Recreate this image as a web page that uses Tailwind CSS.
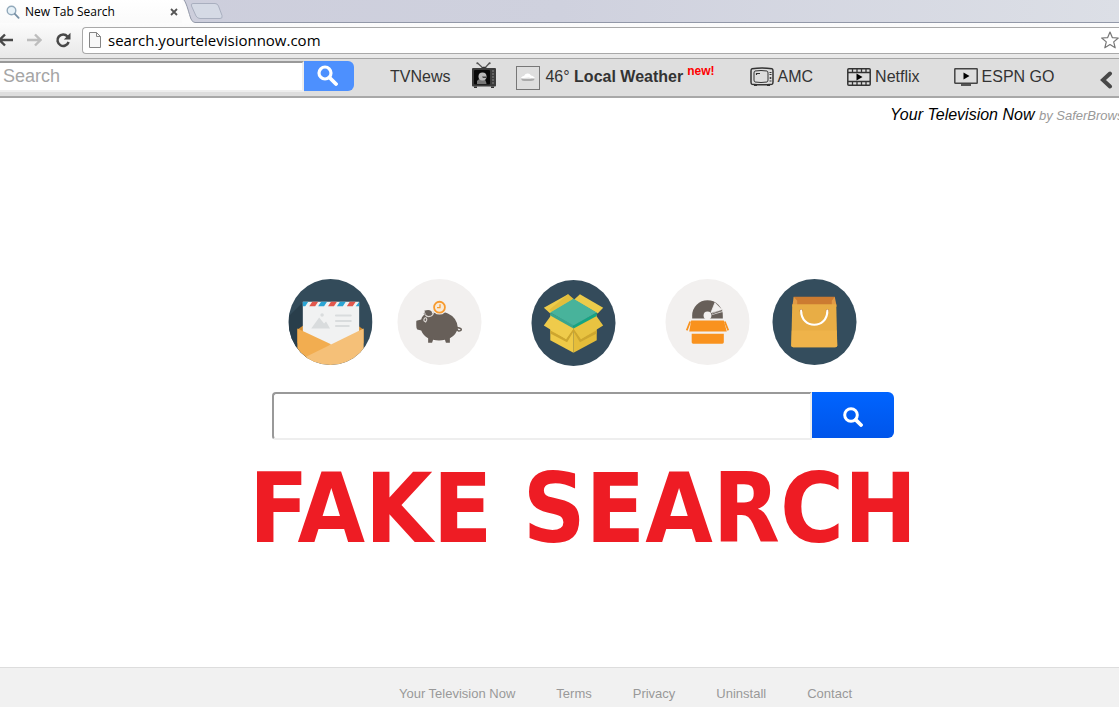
<!DOCTYPE html>
<html lang="en">
<head>
  <meta charset="UTF-8">
  <meta name="viewport" content="width=device-width, initial-scale=1.0">
  <title>New Tab Search</title>
  <script src="https://cdn.jsdelivr.net/npm/@tailwindcss/browser@4"></script>
</head>
<body class="min-h-screen flex flex-col bg-white overflow-x-hidden font-['Liberation_Sans',Arial,sans-serif] text-[#333]">

  <!-- Browser chrome -->
  <header class="font-['Open_Sans','Noto_Sans',sans-serif] text-black">
    <!-- Tab strip -->
    <div class="flex h-[23px] bg-gradient-to-r from-[#cccddb] via-[#cfd1de] to-[#dcdfe6]">
      <div class="flex items-center w-[182px] pl-1.5 pr-0.5 bg-gradient-to-b from-white to-[#fafafa]">
        <svg class="w-3.5 h-3.5" viewBox="0 0 14 14" fill="none">
          <circle cx="5.500" cy="5.500" r="4.300" fill="#e8f2f8" stroke="#92a9bb" stroke-width="1.400"/>
          <path d="M8.800 8.800L12.600 12.800" stroke="#7890a5" stroke-width="1.800" stroke-linecap="round"/>
        </svg>
        <span class="ml-[5px] text-xs leading-4">New Tab Search</span>
        <button class="ml-auto w-3 h-3 flex items-center justify-center" aria-label="Close tab">
          <svg class="w-2 h-2" viewBox="0 0 8 8"><path d="M1 1L7 7M7 1L1 7" stroke="#555" stroke-width="1.800"/></svg>
        </button>
      </div>
      <svg class="w-[50px] h-[23px]" viewBox="0 0 50 23" fill="none">
        <path d="M0 0H2C5 4 7 14 9 19Q10.500 22 13 22.500L50 22.500V23H0Z" fill="#fcfcfc"/>
        <path d="M2 0C5 4 7 14 9 19Q10.500 22.500 13 22.500H50" stroke="#9298a8"/>
        <path d="M11 3.500H33Q35.500 3.500 36.500 6L40 15.500Q41 18.500 38 18.500H18Q15.500 18.500 14 16L9.500 6Q8.500 3.500 11 3.500Z" fill="#d5dae5" stroke="#a9afbf"/>
      </svg>
      <div class="flex-1 border-b border-[#9298a8]"></div>
    </div>

    <!-- Address bar -->
    <div class="flex items-center h-[36px] pb-px bg-gradient-to-b from-[#fcfcfc] to-[#e8e8e8] border-b border-[#a5a5a5]">
      <button class="w-[14px]" aria-label="Back">
        <svg class="w-[14px] h-4" viewBox="0 0 14 16" fill="none" stroke="#484848" stroke-width="2.400"><path d="M13 8H0M5 2.500L-.5 8L5 13.500"/></svg>
      </button>
      <button class="ml-3" aria-label="Forward">
        <svg class="w-4 h-4" viewBox="0 0 16 16" fill="none" stroke="#bdbdbd" stroke-width="2.400"><path d="M1 8H14M9 2.500L14.500 8L9 13.500"/></svg>
      </button>
      <button class="ml-[13px]" aria-label="Reload">
        <svg class="w-4 h-4" viewBox="0 0 16 16" fill="none"><path d="M12.500 4.500A5.700 5.700 0 1 0 13.600 10" stroke="#484848" stroke-width="2.500"/><path d="M15.500 .8V7.500H8.800Z" fill="#484848"/></svg>
      </button>
      <div class="flex flex-1 items-center h-[27px] ml-[11px] pl-1.5 bg-white border border-r-0 border-[#a9a9a9] rounded-l-sm">
        <svg class="w-3 h-4" viewBox="0 0 12 16"><path d="M.5 .5H7.500L11.500 4.500V15.500H.5Z" fill="#f8f8f8" stroke="#858585"/><path d="M7.500 .5V4.500H11.500" fill="none" stroke="#858585"/></svg>
        <input class="flex-1 ml-[7px] text-[15px] leading-5 bg-transparent outline-none" type="text" aria-label="Address" value="search.yourtelevisionnow.com">
        <button aria-label="Bookmark this page">
          <svg class="w-[18px] h-[18px]" viewBox="0 0 18 18"><path d="M9 1L11.300 6.600L17.300 7L12.700 10.900L14.200 16.800L9 13.600L3.800 16.800L5.300 10.900L.7 7L6.700 6.600Z" fill="#fff" stroke="#777" stroke-width="1.200" stroke-linejoin="round"/></svg>
        </button>
      </div>
    </div>
  </header>

  <!-- Toolbar -->
  <nav class="flex items-center h-[39px] pb-0.5 pr-1.5 bg-[#dedede] border-b-2 border-[#a8a8a8] text-base leading-5 whitespace-nowrap">
    <form class="flex items-start h-[31px]">
      <input class="w-[304px] h-[31px] pl-[3px] bg-white border-2 border-l-0 border-t-[#999] border-r-[#eee] border-b-[#eee] text-lg leading-5 placeholder:text-[#a5a5a5] outline-none" type="text" placeholder="Search" aria-label="Search">
      <button class="flex justify-center items-center w-[50px] h-[30px] pb-0.5 pr-1 bg-[#4d90fe] rounded-r-md" type="button" aria-label="Search">
        <svg class="w-[21px] h-[21px]" viewBox="0 0 21 21" fill="none" stroke="#fff"><circle cx="8" cy="8" r="6" stroke-width="3.200"/><path d="M12.500 12.500L19 19" stroke-width="3.800" stroke-linecap="round"/></svg>
      </button>
    </form>
    <a class="ml-9" href="#">TVNews</a>
    <a class="ml-[22px] pb-1" href="#" aria-label="Watch TV">
      <svg class="w-6 h-[26px]" viewBox="0 0 24 26">
        <path d="M12 7L5.500 1M12 7L17.500 1" stroke="#555" stroke-width="1.200"/>
        <circle cx="5.300" cy="1.200" r="1" fill="#555"/><circle cx="17.700" cy="1.200" r="1" fill="#555"/>
        <path d="M9 6L12 4.500L15 6Z" fill="#333"/>
        <rect y="6" width="24" height="18.500" rx="1" fill="#3c3c3c"/>
        <rect x="2" y="8" width="16" height="14.500" rx="1" fill="#080808"/>
        <path d="M5 22V19Q6 17 9 17H12Q14 18 14.500 22Z" fill="#777"/>
        <circle cx="10.500" cy="14.500" r="4" fill="#b9b9b9"/>
        <path d="M10 14.500H14V16H11Z" fill="#444"/>
        <path d="M20 9H22M20 12H22M20 15H22M20 18H22M20 21H22" stroke="#888"/>
        <path d="M2 24.500H5V26H2ZM19 24.500H22V26H19Z" fill="#333"/>
      </svg>
    </a>
    <a class="flex items-center ml-5" href="#">
      <svg class="w-6 h-6 mt-0.5" viewBox="0 0 24 24">
        <rect x=".5" y=".5" width="23" height="23" fill="none" stroke="#777"/>
        <path d="M5 12.500Q5 10.500 8 10Q9 7 12 7.500Q14 7.500 15 9.500Q19 10.500 19 13Z" fill="#fff"/>
        <path d="M5 12.500H19Q18 15 15 15H8Q5.500 15 5 12.500Z" fill="#aaa"/>
        <path d="M5 12.500H15L13 11Z" fill="#eee"/>
      </svg>
      <span class="ml-[5px]">46° <b>Local Weather</b></span>
      <b class="ml-1 pb-3 text-xs text-[#f00]">new!</b>
    </a>
    <a class="flex items-center gap-1 ml-[35px]" href="#">
      <svg class="w-6 h-5" viewBox="0 0 24 20" fill="none" stroke="#333">
        <path d="M2 1.800Q12 .2 22 1.800Q23 2 23 4V15Q23 17 22 17.200Q12 18.500 2 17.200Q1 17 1 15V4Q1 2 2 1.800Z" stroke-width="1.500"/>
        <path d="M5 4Q11 3 17 4Q18 4.200 18 6V13Q18 14.800 17 15Q11 16 5 15Q4 14.800 4 13V6Q4 4.200 5 4Z"/>
        <path d="M6.500 8V6.500H10M19.500 5.500H21.500M19.500 7.500H21.500M19.500 14H21.500M4 18.500H7M17 18.500H20" stroke-width="1.200"/>
        <circle cx="20.500" cy="11" r="1" fill="#333" stroke="none"/>
      </svg>
      AMC
    </a>
    <a class="flex items-center gap-1 ml-[34px]" href="#">
      <svg class="w-6 h-5" viewBox="0 0 24 20" fill="none" stroke="#333">
        <rect x=".8" y="1.800" width="22.400" height="16.400" rx="1" stroke-width="1.500"/>
        <path d="M1 5.500H23M1 14.500H23M5.500 2V5.500M10 2V5.500M14.500 2V5.500M19 2V5.500M5.500 14.500V18M10 14.500V18M14.500 14.500V18M19 14.500V18" stroke-width="1.300"/>
        <path d="M9.500 6.500V13.500L15.500 10Z" fill="#000" stroke="none"/>
      </svg>
      Netflix
    </a>
    <a class="flex items-center gap-1 ml-[34px]" href="#">
      <svg class="w-6 h-5" viewBox="0 0 24 20">
        <rect x=".8" y="1.800" width="22.400" height="14.400" rx=".5" fill="none" stroke="#444" stroke-width="1.500"/>
        <path d="M9.500 5.500V12.500L15.500 9Z" fill="#000"/>
        <path d="M7 17H17V19H7Z" fill="#555"/>
      </svg>
      ESPN GO
    </a>
    <button class="ml-auto pt-1.5" aria-label="Scroll left">
      <svg class="w-[13px] h-[18px]" viewBox="0 0 13 18" fill="none"><path d="M10 2.500L3 9L10 15.500" stroke="#484848" stroke-width="4" stroke-linecap="round"/></svg>
    </button>
  </nav>

  <!-- Page content -->
  <main class="flex-1 flex flex-col">
    <p class="self-end -mr-4 mt-[7px] whitespace-nowrap text-base leading-5 italic text-black">Your Television Now <span class="text-[13px] text-[#999]">by SaferBrowser</span></p>

    <div class="flex justify-center gap-[49px] mt-[153px] pl-[25px]">
      <div class="flex gap-6">
        <!-- Mail -->
        <svg class="w-[85px] h-[86px]" viewBox="0 0 85 87">
          <defs><clipPath id="mail"><ellipse cx="42.500" cy="43.500" rx="42.500" ry="43.500"/></clipPath></defs>
          <g clip-path="url(#mail)">
            <rect width="85" height="87" fill="#334b5a"/>
            <path d="M14 24L0 38V87H20Z" fill="#293e4b"/>
            <path d="M9 51L15 47H70L76 51V65H9Z" fill="#d48d30"/>
            <path d="M14.500 23H71.500V60L43 70L14.500 60Z" fill="#f1f2f2"/>
            <path d="M14.500 23H20L17 27.500H14.500ZM33 23H39L36 27.500H30ZM52 23H58L55 27.500H49ZM71.500 23V27.500H68Z" fill="#2ba5d4"/>
            <path d="M24 23H30L27 27.500H21ZM43 23H49L46 27.500H40ZM62 23H68L65 27.500H59Z" fill="#e2574c"/>
            <path d="M23 50L31 39L36 45L38 43L42 50Z" fill="#d9dcdd"/><circle cx="34" cy="36.500" r="1.800" fill="#d9dcdd"/>
            <path d="M48 37H63M48 42.500H63M48 47.500H61" stroke="#d9dcdd" stroke-width="2" stroke-linecap="round"/>
            <path d="M9 50L43 66L24 87H9Z" fill="#f2ad50"/>
            <path d="M76 50L9 83V87H76Z" fill="#f5c078"/>
          </g>
        </svg>
        <!-- Piggy bank -->
        <svg class="w-[85px] h-[86px]" viewBox="0 0 85 87">
          <ellipse cx="42.500" cy="43.500" rx="42.500" ry="43.500" fill="#f2f0ef"/>
          <path d="M26 35Q31 31 35 35Q43 31 51 35Q60 39 61 49Q60 56 53 60V64.500H49L48 61.500Q42 63 36 61.500L35 64.500H31V60Q26 57 24 52L20 51Q19 50 19 47V43Q19 42 20 42L24 41Q25 37 29 35Z" fill="#675f59"/>
          <path d="M60 49Q66 50 64 52Q61 54 60 50" fill="none" stroke="#675f59" stroke-width="1.600"/>
          <path d="M28 36Q30 39 34 37.500Q37 36 36 32M28 39Q25 42 28.500 43.500Q31 40 28 39" fill="none" stroke="#d9d4d0" stroke-width="1.200"/>
          <path d="M27 32Q34 30 35 34Q34 37 30 36Z" fill="#675f59"/>
          <circle cx="42.500" cy="28.500" r="7.500" fill="#f2f0ef"/><circle cx="42.500" cy="28.500" r="5.500" fill="#f7ead8" stroke="#f79a2e" stroke-width="1.800"/>
          <path d="M43 25.500V29H40" fill="none" stroke="#f79a2e" stroke-width="1.300"/>
        </svg>
      </div>
      <!-- Box -->
      <svg class="w-[85px] h-[86px] mt-px" viewBox="0 0 85 87">
        <ellipse cx="42.500" cy="43.500" rx="42.500" ry="43.500" fill="#344b5b"/>
        <path d="M12.500 28L37 14.500L42 20L19 34Z" fill="#edcb4a"/>
        <path d="M72.500 28L49 14.500L43 20L67 34Z" fill="#edcb4a"/>
        <path d="M37 14.500L42.500 19L20 32L18 30Z" fill="#e3be3c"/>
        <path d="M19 35L42.500 48V73.500L19 61Z" fill="#efca47"/>
        <path d="M66 35L42.500 48V73.500L66 61Z" fill="#e5bd3a"/>
        <path d="M19 51L35 59.500L42.500 49L50 59.500L66 51V54L49 63L42.500 52L36 63L19 54Z" fill="#cda62f"/>
        <path d="M19 37L42.500 49L35 60L12.500 46Z" fill="#efcb4b"/>
        <path d="M66 37L42.500 49L50 60L72.500 46Z" fill="#e8c341"/>
        <path d="M19 36L42.500 49V45.500L19 33Z" fill="#39a58d"/>
        <path d="M66 33L42.500 45.500V49L66 36.500Z" fill="#14a583"/>
        <path d="M42.500 19L66 33L42.500 46L19 33Z" fill="#48b39b"/>
      </svg>
      <div class="flex gap-[22px]">
        <!-- Record box -->
        <svg class="w-[85px] h-[86px]" viewBox="0 0 85 87">
          <ellipse cx="42.500" cy="43.500" rx="42.500" ry="43.500" fill="#f2f0ef"/>
          <path d="M27 40V37A15.500 15.500 0 0 1 58 37V40Z" fill="#675f59"/>
          <path d="M46 34L50 24L57 31ZM47 35L57 31.500M47 36L57.500 33" fill="#f2f0ef" stroke="#f2f0ef" stroke-width=".8"/>
          <path d="M47 35.500L57.500 31.500" stroke="#675f59" stroke-width=".8"/>
          <circle cx="42.500" cy="37" r="4" fill="#f2f0ef"/>
          <path d="M26 42H59L62 53H24ZM26.500 55.500H59V64Q59 65.500 57.500 65.500H28Q26.500 65.500 26.500 64Z" fill="#f9921e"/>
          <path d="M25 43L21.500 52M60 43L63.500 52" stroke="#f9921e" stroke-width="1.800"/>
        </svg>
        <!-- Shopping bag -->
        <svg class="w-[85px] h-[86px]" viewBox="0 0 85 87">
          <ellipse cx="42.500" cy="43.500" rx="42.500" ry="43.500" fill="#344d5d"/>
          <path d="M21.500 18H63V28H21.500Z" fill="#cc7b31"/>
          <path d="M21.500 18L25 22V26L20 28ZM63 18L60 22V26L65 28Z" fill="#e19a45"/>
          <path d="M20 25.500H64.500L65.500 67Q65.500 69 63.500 69H21Q19 69 19 67Z" fill="#e8ad45"/>
          <path d="M19.500 52H65L65.500 67Q65.500 69 63.500 69H21Q19 69 19 67Z" fill="#efb34a"/>
          <circle cx="29" cy="32" r="1.600" fill="#c47a2c"/><circle cx="55.500" cy="32" r="1.600" fill="#c47a2c"/>
          <path d="M29 32C29 51 55.500 51 55.500 32" fill="none" stroke="#fff" stroke-width="2.200" stroke-linecap="round"/>
        </svg>
      </div>
    </div>

    <form class="flex justify-center items-start mt-[26px] pl-[47px]">
      <input class="w-[540px] h-12 px-3 bg-white border-2 border-t-[#999] border-l-[#999] border-r-[#eee] border-b-[#eee] rounded-l-[4px] text-xl outline-none" type="text" aria-label="Search the web">
      <button class="flex justify-center items-center w-[82px] h-[46px] pt-1 bg-gradient-to-b from-[#0064ff] to-[#0055ea] rounded-r-md" type="button" aria-label="Search">
        <svg class="w-5 h-5" viewBox="0 0 20 20" fill="none" stroke="#fff"><circle cx="8" cy="8" r="6.300" stroke-width="3"/><path d="M12.800 12.800L18 18" stroke-width="3.800" stroke-linecap="round"/></svg>
      </button>
    </form>

    <p class="mt-[19px] pl-[47px] text-center whitespace-nowrap font-['DejaVu_Sans_Condensed','DejaVu_Sans',sans-serif] font-bold text-[97px] leading-[100px] text-[#ee1c24]">FAKE SEARCH</p>
  </main>

  <footer class="flex justify-center gap-[41px] h-10 pt-4 pl-[132px] bg-[#f1f1f1] border-t border-[#ddd] text-[13px] leading-5 text-[#999]">
    <a href="#">Your Television Now</a>
    <a href="#">Terms</a>
    <a href="#">Privacy</a>
    <a href="#">Uninstall</a>
    <a href="#">Contact</a>
  </footer>
</body>
</html>
